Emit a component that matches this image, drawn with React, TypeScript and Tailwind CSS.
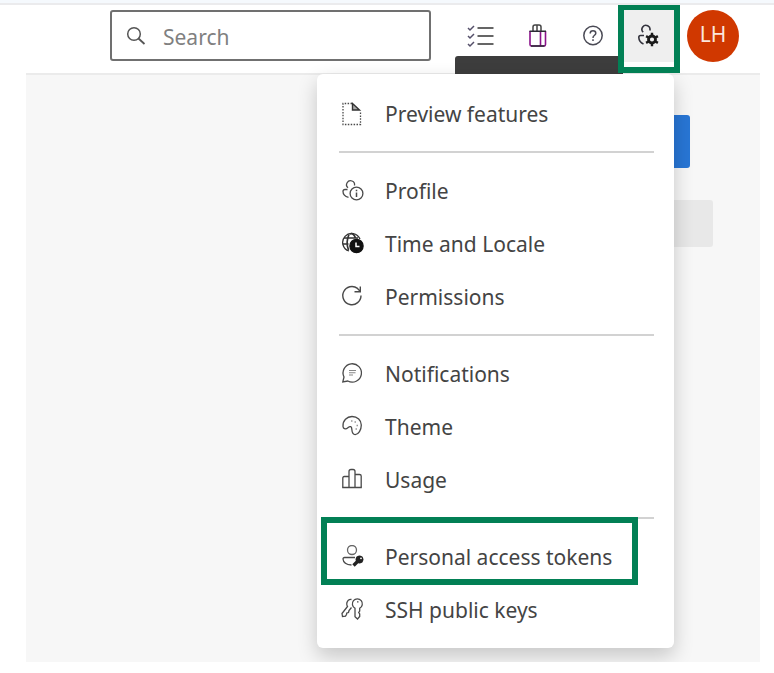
import type { ReactNode } from "react";

function Glyph({ children }: { children: ReactNode }) {
  return (
    <svg
      viewBox="0 0 24 24"
      className="h-6 w-6 shrink-0"
      fill="none"
      stroke="#4a4a4a"
      strokeWidth="1.3"
      aria-hidden="true"
    >
      {children}
    </svg>
  );
}

const PreviewIcon = () => (
  <Glyph>
    <path d="M11 1.500H2V22.500H19.500V9" strokeDasharray="1.5 1.4" />
    <path d="M11.500 1.500V8H18.500Z" fill="#aaa" stroke="#333" strokeWidth="1.400" />
  </Glyph>
);

const ProfileIcon = () => (
  <Glyph>
    <path d="M7 8.800A4 4 0 1 1 13.500 6.500" />
    <path d="M6.500 10.500H4Q2 10.500 2 12.500Q2 17 7.500 18.300" />
    <circle cx="15.500" cy="14.500" r="6.400" />
    <path d="M15.500 13.500V18M15.500 10.800V12.200" strokeWidth="1.500" />
  </Glyph>
);

const TimeIcon = () => (
  <Glyph>
    <path d="M8 19A9 9 0 1 1 19 7" stroke="#333" />
    <path d="M7.500 18Q4.500 10 8 2.500M9 2Q12.500 0.500 14.500 6M3 6H17M1.800 12H7.500" stroke="#333" strokeWidth="1.700" />
    <circle cx="15.500" cy="14" r="6.600" fill="#111" stroke="#111" />
    <path d="M15 10.500V14.500H18.500" stroke="#fff" strokeWidth="1.500" />
  </Glyph>
);

const PermissionsIcon = () => (
  <Glyph>
    <path d="M20 10.500A9.100 9.100 0 1 1 16.500 3.400L19 6" strokeWidth="1.400" />
    <path d="M19.300 1.500V6.800H13.500" strokeWidth="1.400" />
  </Glyph>
);

const NotificationsIcon = () => (
  <Glyph>
    <path d="M3 15A9.200 9.200 0 1 1 6.800 19L1.800 20Z" />
    <path d="M8 8.500H15M8 10.800H14.500M8 13H12" stroke="#888" strokeWidth="1.100" />
  </Glyph>
);

const ThemeIcon = () => (
  <Glyph>
    <path d="M2 11.500C1.500 5.500 6 1.500 11 1.500C16.500 1.500 20.300 5.500 20.300 10C20.300 15 17.500 19.600 14.200 19.600C11 19.600 11 16.500 10.800 14C10.700 11.500 9 11 7.500 12.200C6.300 13.200 5.500 14 4 13.800C2.800 13.600 2 12.700 2 11.500Z" />
    <path d="M10 6H11.500M13.500 7H15M15.500 10.500H17M14.500 14H16" stroke="#999" strokeWidth="1.300" />
  </Glyph>
);

const UsageIcon = () => (
  <Glyph>
    <path d="M1.800 19.500V10Q1.800 8.500 3.300 8.500H8M8 19.500V3.500Q8 1.500 10 1.500H12Q14 1.500 14 3.500V19.500M14 6.500H18.500Q20.200 6.500 20.200 8V19.500" />
    <path d="M1.200 19.500H20.800" strokeWidth="1.500" />
  </Glyph>
);

const TokenIcon = () => (
  <Glyph>
    <circle cx="11" cy="5" r="4.500" stroke="#666" />
    <path d="M14 12.500H3.500Q2 12.500 2 14Q2.500 19.500 10.500 20" />
    <path d="M12.500 20.500L18 15" stroke="#222" strokeWidth="3.400" />
    <circle cx="18.500" cy="14.500" r="3.700" fill="#222" stroke="#222" strokeWidth="0.500" />
    <circle cx="20" cy="13.300" r="0.900" fill="#fff" stroke="none" />
  </Glyph>
);

const KeysIcon = () => (
  <Glyph>
    <path d="M14 10.200A5 5 0 1 1 18.700 10.200V13L17.700 14.500L18.700 16V18.500L16.500 21L14 18.800Z" />
    <path d="M16 3.800H17.500" />
    <path d="M10.500 1.500Q7 1 5.800 5Q5.500 7.500 6.500 8.500L1 15.500L1.500 18.500L4.500 18.200L5.500 16.500L5.800 15L7.500 14.500L8 12.500L10.500 9.500" />
  </Glyph>
);

type Item = { label: string; icon: ReactNode; marked?: boolean };

const groups: Item[][] = [
  [{ label: "Preview features", icon: <PreviewIcon /> }],
  [
    { label: "Profile", icon: <ProfileIcon /> },
    { label: "Time and Locale", icon: <TimeIcon /> },
    { label: "Permissions", icon: <PermissionsIcon /> },
  ],
  [
    { label: "Notifications", icon: <NotificationsIcon /> },
    { label: "Theme", icon: <ThemeIcon /> },
    { label: "Usage", icon: <UsageIcon /> },
  ],
  [
    { label: "Personal access tokens", icon: <TokenIcon />, marked: true },
    { label: "SSH public keys", icon: <KeysIcon /> },
  ],
];

function SettingsMenu() {
  return (
    <nav
      aria-label="User settings"
      className="absolute top-16 right-0 z-20 w-[357px] rounded-md bg-white pt-[13px] pb-3 shadow-[0_8px_20px_rgba(0,0,0,0.2)]"
    >
      {groups.map((group, index) => (
        <div key={index}>
          {index > 0 && <hr className="my-[11px] mr-5 ml-[22px] border-t-2 border-[#d2d2d2]" />}
          <ul>
            {group.map((item) => (
              <li key={item.label} className="relative">
                <a
                  href="#"
                  className="flex h-[53px] items-center gap-5 pl-6 text-[21px] whitespace-nowrap text-[#444]"
                >
                  {item.icon}
                  <span className="pt-0.5">{item.label}</span>
                </a>
                {item.marked && (
                  <span className="pointer-events-none absolute -top-[13px] right-9 -bottom-0.5 left-1 border-6 border-[#028055]" />
                )}
              </li>
            ))}
          </ul>
        </div>
      ))}
    </nav>
  );
}

export default function App() {
  return (
    <div className="min-h-screen bg-white font-['Noto_Sans','Open_Sans',sans-serif]">
      <div className="h-[5px] border-b-2 border-[#ebebed] bg-[#f5f9fd]" />
      <div className="mr-3.5 ml-[26px] overflow-hidden">
        <header className="relative flex h-[70px] items-start border-b-2 border-[#ebebeb] pt-[5px] pr-[21px] pl-[84px]">
          <label className="flex h-[51px] min-w-0 flex-1 items-center gap-4 rounded-[3px] border-2 border-[#707070] bg-white pl-3.5">
            <svg viewBox="0 0 20 20" className="h-5 w-5 shrink-0" fill="none" stroke="#555" strokeWidth="1.500" aria-hidden="true">
              <circle cx="8" cy="8" r="6.300" />
              <path d="M12.500 12.500L18.500 18" strokeWidth="1.800" />
            </svg>
            <input
              type="search"
              aria-label="Search"
              placeholder="Search"
              className="w-full min-w-0 bg-transparent pt-1 pl-px text-[21px] outline-none placeholder:text-[#808080]"
            />
          </label>

          <div className="ml-[22px] flex">
            <button type="button" aria-label="Work items" className="flex h-[52px] w-14 items-center justify-center">
              <svg viewBox="0 0 28 24" className="h-6 w-7" fill="none" aria-hidden="true">
                <path d="M1 4L3 6L7 2M1 12L3 14L7 10M1 20L3 22L7 18" stroke="#55506a" strokeWidth="1.500" />
                <path d="M10.500 4H26.500M10.500 12H26.500M10.500 20H26.500" stroke="#333" strokeWidth="1.600" />
              </svg>
            </button>
            <button type="button" aria-label="Marketplace" className="flex h-[52px] w-14 items-center justify-center">
              <svg viewBox="0 0 20 24" className="ml-0.5 h-6 w-5" fill="none" aria-hidden="true">
                <path d="M5 7V3Q5 1 7 1H11Q13 1 13 3V7M9 1V7" stroke="#444" strokeWidth="1.500" />
                <path d="M2 7V20.500Q2 22 3.500 22H16Q17.500 22 17.500 20.500V7M12.500 7V22" stroke="#8a128a" strokeWidth="1.600" />
                <path d="M1.500 7.200H18M3 22H16.500" stroke="#2b2b35" strokeWidth="1.600" />
              </svg>
            </button>
            <button type="button" aria-label="Help" className="flex h-[52px] w-14 items-center justify-center">
              <svg viewBox="0 0 24 24" className="h-6 w-6" fill="none" stroke="#4a4a55" strokeWidth="1.500" aria-hidden="true">
                <circle cx="12" cy="11.500" r="9.200" />
                <path d="M9.200 9.500Q9.200 6.800 12 6.800Q14.800 6.800 14.800 9.300Q14.800 10.500 13.300 11.500Q12 12.400 12 14M12 15.300V17" />
              </svg>
            </button>
          </div>

          <div className="absolute top-[51px] right-[137px] h-[18px] w-[168px] rounded-tl-[3px] bg-[#3d3d3d]" />

          <div className="relative ml-[3px]">
            <button
              type="button"
              aria-label="User settings"
              className="flex h-[52px] w-[50px] items-center justify-center bg-[#efefef]"
            >
              <svg viewBox="0 0 24 24" className="h-6 w-6" fill="none" stroke="#33333d" strokeWidth="1.600" aria-hidden="true">
                <path d="M6.200 8.200A4 4 0 1 1 12.800 6.500" />
                <path d="M7 11.500H3.500Q1.800 11.500 1.800 13.500Q2 18 6.500 20" />
                <circle cx="15" cy="15.500" r="3.500" stroke="#1b1b1b" strokeWidth="2.800" />
                <path
                  d="M15 8.700V11.500M15 19.500V22.300M9.100 12.100L11.500 13.500M18.500 17.500L20.900 18.900M9.100 18.900L11.500 17.500M18.500 13.500L20.900 12.100"
                  stroke="#1b1b1b"
                  strokeWidth="2.400"
                />
              </svg>
            </button>
            <SettingsMenu />
            <span className="pointer-events-none absolute -top-1.5 -right-1.5 -bottom-[11px] -left-1.5 z-30 border-6 border-[#028055]" />
          </div>

          <button
            type="button"
            aria-label="Account"
            className="ml-[13px] h-[52px] w-[52px] rounded-full bg-[#d03800] pb-0.5 text-[21px] text-[#fbe6dc]"
          >
            LH
          </button>
        </header>

        <main className="flex min-h-[calc(100vh-86px)] flex-col items-end bg-[#f7f7f7] pt-10">
          <button type="button" aria-label="New" className="mr-[70px] h-[53px] w-32 rounded-[3px] bg-[#2876d5]" />
          <button type="button" aria-label="Filter" className="mt-8 mr-[47px] h-[47px] w-40 rounded-[3px] bg-[#e8e8e8]" />
        </main>
      </div>
    </div>
  );
}
